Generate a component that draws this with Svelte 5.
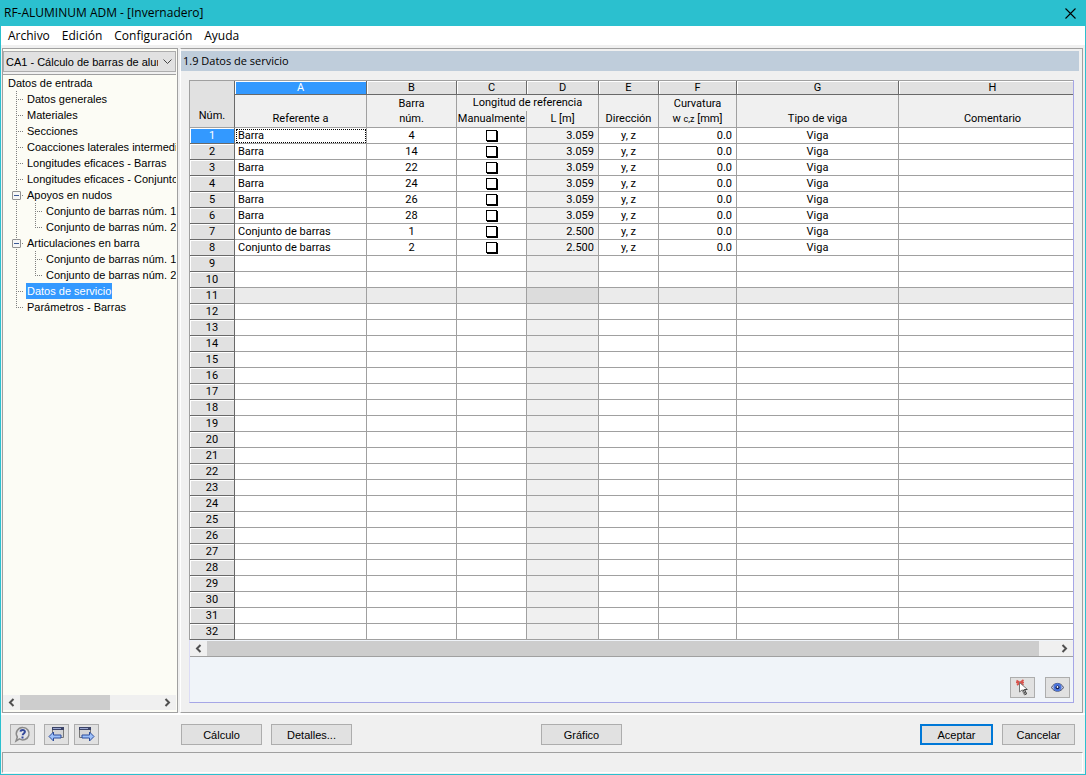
<script lang="ts">
  type Node = { label: string; children?: string[] };

  const menu = ['Archivo', 'Edición', 'Configuración', 'Ayuda'];

  const tree: Node[] = [
    { label: 'Datos generales' },
    { label: 'Materiales' },
    { label: 'Secciones' },
    { label: 'Coacciones laterales intermedias' },
    { label: 'Longitudes eficaces - Barras' },
    { label: 'Longitudes eficaces - Conjuntos' },
    { label: 'Apoyos en nudos', children: ['Conjunto de barras núm. 1', 'Conjunto de barras núm. 2'] },
    { label: 'Articulaciones en barra', children: ['Conjunto de barras núm. 1', 'Conjunto de barras núm. 2'] },
    { label: 'Datos de servicio' },
    { label: 'Parámetros - Barras' }
  ];

  let selected = $state('Datos de servicio');
  let collapsed: Record<string, boolean> = $state({});

  const letters = ['A', 'B', 'C', 'D', 'E', 'F', 'G', 'H'];

  const members = ['4', '14', '22', '24', '26', '28'].map((num) => ({
    ref: 'Barra', num, manual: false, length: '3.059', dir: 'y, z', camber: '0.0', beam: 'Viga'
  }));
  const sets = ['1', '2'].map((num) => ({
    ref: 'Conjunto de barras', num, manual: false, length: '2.500', dir: 'y, z', camber: '0.0', beam: 'Viga'
  }));
  let rows = $state([...members, ...sets]);

  const rowCount = 32;
  const hoverRow = 11;
</script>

{#snippet arrow(dir: string)}
  <svg width="7" height="9" viewBox="0 0 7 9" fill="none" stroke="#505050" stroke-width="2">
    <path d={dir === 'left' ? 'M5.5 1 2 4.5 5.5 8' : 'M1.5 1 5 4.5 1.5 8'} />
  </svg>
{/snippet}

<div class="window">
  <header class="titlebar">
    <span>RF-ALUMINUM ADM - [Invernadero]</span>
    <button class="close" aria-label="Cerrar">
      <svg width="11" height="11" viewBox="0 0 11 11" stroke="#000" stroke-width="1.1">
        <path d="M.5.5l10 10M10.5.5l-10 10" />
      </svg>
    </button>
  </header>

  <nav class="menu">
    {#each menu as item}
      <button>{item}</button>
    {/each}
  </nav>

  <div class="body">
    <aside>
      <div class="case">
        <select aria-label="Caso de cálculo">
          <option>CA1 - Cálculo de barras de aluminio</option>
        </select>
        <svg width="9" height="6" viewBox="0 0 9 6" fill="none" stroke="#444">
          <path d="M.5.5l4 4 4-4" />
        </svg>
      </div>

      <div class="tree">
        <div class="node"><span class="label">Datos de entrada</span></div>
        {#each tree as node, i}
          <div class="node">
            <span class="guide" class:last={i === tree.length - 1}>
              {#if node.children}
                <button
                  class="expander"
                  aria-label={node.label}
                  onclick={() => (collapsed[node.label] = !collapsed[node.label])}
                >
                  <svg width="7" height="7" viewBox="0 0 7 7" stroke="#3c5a96">
                    <path d="M1 3.5h5" />
                    {#if collapsed[node.label]}<path d="M3.5 1v5" />{/if}
                  </svg>
                </button>
              {/if}
            </span>
            <button class="label" class:selected={selected === node.label} onclick={() => (selected = node.label)}>
              {node.label}
            </button>
          </div>
          {#if node.children && !collapsed[node.label]}
            {#each node.children as child, j}
              <div class="node">
                <span class="guide through"></span>
                <span class="guide" class:last={j === node.children.length - 1}></span>
                <button class="label" onclick={() => (selected = child + i)}>{child}</button>
              </div>
            {/each}
          {/if}
        {/each}
      </div>

      <div class="scroll">
        <button aria-label="Desplazar a la izquierda">{@render arrow('left')}</button>
        <div class="track"><div class="thumb tree-thumb"></div></div>
        <button aria-label="Desplazar a la derecha">{@render arrow('right')}</button>
      </div>
    </aside>

    <main>
      <h1>1.9 Datos de servicio</h1>

      <div class="grid">
        <div class="viewport">
          <table>
            <colgroup>
              <col class="c-num" /><col class="c-a" /><col class="c-b" /><col class="c-c" /><col class="c-d" />
              <col class="c-e" /><col class="c-f" /><col class="c-g" /><col />
            </colgroup>
            <thead>
              <tr class="letters">
                <th rowspan="3" class="corner">Núm.</th>
                {#each letters as letter}
                  <th class:active={letter === 'A'}>{letter}</th>
                {/each}
              </tr>
              <tr class="titles">
                <th rowspan="2">Referente a</th>
                <th rowspan="2">Barra<br />núm.</th>
                <th colspan="2" class="group">Longitud de referencia</th>
                <th rowspan="2">Dirección</th>
                <th rowspan="2">Curvatura<br />w <small>c,z</small> [mm]</th>
                <th rowspan="2">Tipo de viga</th>
                <th rowspan="2">Comentario</th>
              </tr>
              <tr class="titles">
                <th>Manualmente</th>
                <th>L [m]</th>
              </tr>
            </thead>
            <tbody>
              {#each Array(rowCount) as _, i}
                {@const row = rows[i]}
                <tr class:hover={i + 1 === hoverRow}>
                  <th class:active={i === 0}>{i + 1}</th>
                  <td class="text" class:focus={i === 0}>{row?.ref ?? ''}</td>
                  <td>{row?.num ?? ''}</td>
                  <td>
                    {#if row}
                      <input type="checkbox" bind:checked={row.manual} aria-label="Manualmente, fila {i + 1}" />
                    {/if}
                  </td>
                  <td class="number locked">{row?.length ?? ''}</td>
                  <td>{row?.dir ?? ''}</td>
                  <td class="number">{row?.camber ?? ''}</td>
                  <td>{row?.beam ?? ''}</td>
                  <td></td>
                </tr>
              {/each}
            </tbody>
          </table>
        </div>

        <div class="scroll">
          <button aria-label="Desplazar a la izquierda">{@render arrow('left')}</button>
          <div class="track"><div class="thumb grid-thumb"></div></div>
          <button aria-label="Desplazar a la derecha">{@render arrow('right')}</button>
        </div>

        <div class="tools">
          <button class="btn icon" aria-label="Seleccionar en el gráfico">
            <svg width="17" height="17" viewBox="0 0 17 17">
              <path d="M2.5 1.500l7 4.500M9.500 1L3 6M2 3.500h8" stroke="#d9534c" stroke-width="1.7" />
              <path d="M5.500 3.500v9.500l2.500-2L10.500 16l2-1-2-4.500h3z" fill="#fff" stroke="#777" />
              <path d="M9 10.500l2.300 5 1.200-.7-2-4.300h2.500" fill="none" stroke="#444" />
            </svg>
          </button>
          <button class="btn icon" aria-label="Modo de vista">
            <svg width="17" height="17" viewBox="0 0 17 17">
              <path d="M2.500 8.500C5 3 12 3 14.500 8.500 12 13.500 5 13.500 2.500 8.500z" fill="#c4cbe4" stroke="#4a5068" />
              <circle cx="8.500" cy="8.300" r="4" fill="#4a74dc" />
              <circle cx="8.500" cy="8.300" r="1.900" fill="#101c50" />
              <circle cx="8.500" cy="8" r=".9" fill="#fff" />
            </svg>
          </button>
        </div>
      </div>
    </main>
  </div>

  <footer>
    <div class="nav">
      <button class="btn icon help" aria-label="Ayuda">
        <svg width="17" height="17" viewBox="0 0 17 17">
          <path d="M9 1.500a6.200 6.200 0 1 1-3.500 11.400L2 15l1.300-4A6.200 6.200 0 0 1 9 1.500z" fill="#e4e4e6" stroke="#8a8a8a" stroke-width="1.500" />
          <path d="M6.500 5.600C6.800 3.400 11 3.400 10.900 5.800c0 1.700-2.200 1.900-2.200 3.500M8.500 10.500v2" fill="none" stroke="#34499a" stroke-width="2" />
        </svg>
      </button>
      <button class="btn icon" aria-label="Tabla anterior">
        <svg width="17" height="17" viewBox="0 0 17 17">
          <path d="M4.500 1.500h11v10h-11z" fill="#d4d4d6" stroke="#777" />
          <path d="M4 1h12v3H4z" fill="#3c4468" />
          <path d="M5 2h8v1H5z" fill="#9aa6d0" />
          <path d="M1 10.500l4.500-4.500v3h7.500v3H5.500v3z" fill="#9cc0fa" stroke="#2d4c9c" />
        </svg>
      </button>
      <button class="btn icon" aria-label="Tabla siguiente">
        <svg width="17" height="17" viewBox="0 0 17 17">
          <path d="M1.500 1.500h11v10h-11z" fill="#d4d4d6" stroke="#777" />
          <path d="M1 1h12v3H1z" fill="#3c4468" />
          <path d="M2 2h8v1H2z" fill="#9aa6d0" />
          <path d="M16 10.500L11.500 6v3H4v3h7.500v3z" fill="#9cc0fa" stroke="#2d4c9c" />
        </svg>
      </button>
    </div>
    <button class="btn wide">Cálculo</button>
    <button class="btn wide">Detalles...</button>
    <button class="btn wide graphic">Gráfico</button>
    <div class="confirm">
      <button class="btn default">Aceptar</button>
      <button class="btn">Cancelar</button>
    </div>
  </footer>

  <div class="status"></div>
</div>

<style>
  :global(body) {
    background: #f0f0f0;
  }

  .window {
    box-sizing: border-box;
    min-height: 100vh;
    display: flex;
    flex-direction: column;
    border: 1px solid #2bc0cf;
    border-top: 0;
    background: #f0f0f0;
    color: #000;
    font-family: 'Liberation Sans', Arial, sans-serif;
    font-size: 11px;
    line-height: 16px;
  }

  button,
  select,
  input {
    font: inherit;
    color: inherit;
    margin: 0;
    padding: 0;
    border: 0;
    background: none;
  }

  svg {
    display: block;
  }

  .titlebar,
  .menu {
    display: flex;
    align-items: center;
    font-family: 'Open Sans', 'Noto Sans', sans-serif;
    font-size: 12px;
  }

  .titlebar {
    height: 26px;
    justify-content: space-between;
    padding: 0 9px 0 3px;
    background: #2bc0cf;
  }

  .menu {
    height: 19px;
    gap: 12px;
    padding: 0 7px;
    background: #fff;
  }

  .body {
    flex: 1;
    display: flex;
    gap: 2px;
    padding: 3px 2px 0 1px;
  }

  aside {
    width: 176px;
    box-sizing: border-box;
    display: flex;
    flex-direction: column;
    border: 1px solid #a0a0a0;
    padding: 2px 1px 2px 0;
    background: #fcfcf5;
  }

  .case {
    display: grid;
    align-items: center;
    border-bottom: 1px solid #a0a0a0;
    padding-bottom: 2px;
    background: #f0f0f0;
  }

  .case select,
  .case svg {
    grid-area: 1 / 1;
  }

  .case select {
    appearance: none;
    width: 100%;
    height: 21px;
    border: 1px solid #adadad;
    padding: 0 17px 0 2px;
    background: #e1e1e1;
  }

  .case svg {
    justify-self: end;
    margin-right: 4px;
    pointer-events: none;
  }

  .tree {
    flex: 1;
    overflow: hidden;
    padding: 0 0 0 4px;
  }

  .node {
    display: flex;
    height: 16px;
    white-space: nowrap;
  }

  .label {
    padding: 0 1px;
  }

  .selected {
    background: #3399ff;
    color: #fff;
  }

  .guide {
    width: 19px;
    flex: none;
    display: flex;
    align-items: center;
    justify-content: center;
    background:
      repeating-linear-gradient(#808080 0 1px, transparent 1px 2px) 9px 0 / 1px 16px no-repeat,
      repeating-linear-gradient(90deg, #808080 0 1px, transparent 1px 2px) 9px 8px / 8px 1px no-repeat;
  }

  .guide.last {
    background:
      repeating-linear-gradient(#808080 0 1px, transparent 1px 2px) 9px 0 / 1px 8px no-repeat,
      repeating-linear-gradient(90deg, #808080 0 1px, transparent 1px 2px) 9px 8px / 8px 1px no-repeat;
  }

  .guide.through {
    background: repeating-linear-gradient(#808080 0 1px, transparent 1px 2px) 9px 0 / 1px 16px no-repeat;
  }

  .expander {
    border: 1px solid #919191;
    border-radius: 1px;
    background: #f6f6f6;
  }

  .scroll {
    display: flex;
    height: 15px;
    background: #f0f0f0;
  }

  .scroll button {
    width: 17px;
    display: grid;
    place-items: center;
  }

  .track {
    flex: 1;
  }

  .thumb {
    height: 100%;
    background: #cdcdcd;
  }

  .tree-thumb {
    width: 65%;
  }

  .grid-thumb {
    width: 98%;
  }

  main {
    flex: 1;
    min-width: 0;
    border: 1px solid #a0a0a0;
    border-left-color: #fff;
    padding: 2px 2px 9px 0;
  }

  h1 {
    margin: 0 1px 9px 0;
    padding: 2px;
    background: #bfcddb;
    font-family: 'Open Sans', 'Noto Sans', sans-serif;
    font-size: 11px;
    font-weight: normal;
  }

  .grid {
    margin: 0 6px 0 8px;
    border: 1px solid #a6a6e6;
    border-top: 0;
    border-left-color: #dcdcf5;
    background: #f0f4f9;
  }

  .viewport {
    overflow: hidden;
    margin-left: -1px;
    border-top: 1px solid #a0a0a0;
    border-left: 1px solid #a0a0a0;
    font-family: Roboto, 'Liberation Sans', sans-serif;
  }

  /* the last column runs on under the right edge */
  table {
    width: calc(100% + 14px);
    table-layout: fixed;
    border-spacing: 0;
    background: #fff;
  }

  .c-num { width: 45px; }
  .c-a { width: 132px; }
  .c-b { width: 90px; }
  .c-c { width: 70px; }
  .c-d { width: 72px; }
  .c-e { width: 60px; }
  .c-f { width: 78px; }
  .c-g { width: 162px; }

  th,
  td {
    box-sizing: border-box;
    height: 16px;
    padding: 0;
    border-right: 1px solid #a0a0a0;
    border-bottom: 1px solid #a0a0a0;
    font-weight: normal;
    line-height: 15px;
    text-align: center;
    white-space: nowrap;
  }

  .letters th {
    height: 14px;
    border-right-color: #696969;
    border-bottom-color: #696969;
    background: #e1e1e1;
    box-shadow: inset 1px 1px #fff;
    line-height: 13px;
  }

  .titles th {
    padding-bottom: 1px;
    background: #f0f0f0;
    vertical-align: bottom;
  }

  .titles .group {
    border-bottom: 0;
  }

  .titles:last-child th {
    height: 17px;
  }

  small {
    font-size: 9px;
    line-height: 0;
  }

  .letters .corner {
    vertical-align: bottom;
    padding-bottom: 5px;
    border-bottom-color: #a0a0a0;
    box-shadow: none;
  }

  tbody th {
    border-right-color: #696969;
    border-bottom-color: #696969;
    background: #e1e1e1;
    box-shadow: inset 1px 1px #fff;
  }

  .letters .active,
  tbody .active {
    background: #3399ff;
    color: #fff;
  }

  .text {
    padding-left: 3px;
    text-align: left;
  }

  .focus {
    outline: 1px dotted #000;
    outline-offset: -2px;
  }

  .number {
    padding-right: 4px;
    text-align: right;
  }

  .locked {
    background: #f0f0f0;
  }

  .hover td {
    background: #ebebeb;
  }

  .hover .locked {
    background: #dcdcdc;
  }

  td input {
    appearance: none;
    display: block;
    width: 11px;
    height: 11px;
    margin: 0 auto;
    border: 1px solid #000;
    background: #fff;
    box-shadow: 1px 1px #000;
  }

  td input:checked {
    background: #000;
    background-clip: content-box;
    padding: 2px;
  }

  .grid .scroll {
    margin-top: 1px;
    border-bottom: 1px solid #a0a0a0;
  }

  .tools {
    display: flex;
    justify-content: flex-end;
    gap: 10px;
    padding: 20px 3px 4px;
  }

  .btn {
    box-sizing: border-box;
    width: 73px;
    height: 21px;
    border: 1px solid #adadad;
    background: #e1e1e1;
  }

  .btn:hover {
    border-color: #0078d7;
    background: #e5f1fb;
  }

  .btn.icon {
    width: 25px;
    display: grid;
    place-items: center;
  }

  .btn.wide {
    width: 81px;
  }

  .btn.default {
    border: 2px solid #0078d7;
  }

  footer {
    display: flex;
    gap: 9px;
    padding: 9px 10px 7px 9px;
    border-top: 2px solid #fff;
  }

  .nav {
    display: flex;
    gap: 5px;
    width: 162px;
  }

  .help {
    margin-right: 4px;
  }

  .graphic {
    margin-left: 180px;
  }

  .confirm {
    display: flex;
    gap: 9px;
    margin-left: auto;
  }

  .status {
    height: 19px;
    margin: 0 2px 1px 1px;
    border: 1px solid #fff;
    border-top-color: #a0a0a0;
    border-left-color: #a0a0a0;
  }
</style>
